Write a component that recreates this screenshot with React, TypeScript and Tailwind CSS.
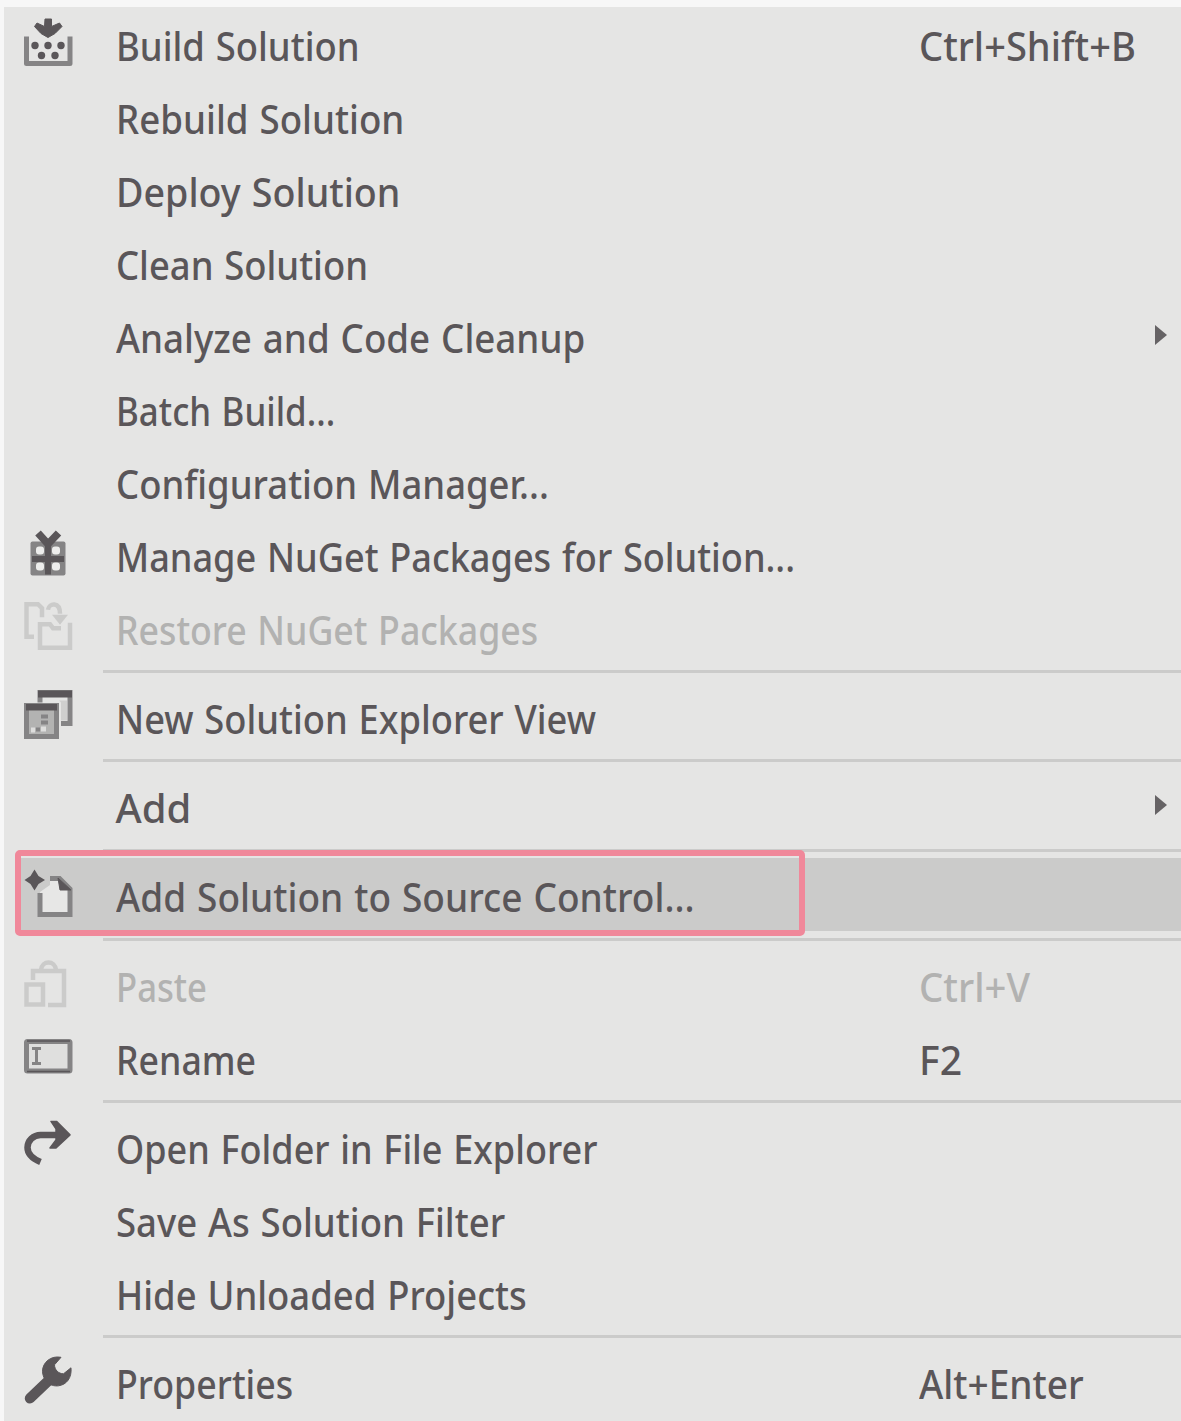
import { Fragment, useLayoutEffect, useRef, useState, type ReactNode } from "react";

const INK = "#5a5659";
const GREY = "#858485";
const FAINT = "#cbcbca";

function Icon({ top, children }: { top: number; children: ReactNode }) {
  return (
    <svg className="block h-14 w-14" viewBox={`20 ${top} 56 56`} fill="none">
      {children}
    </svg>
  );
}

const buildIcon = (
  <Icon top={15.5}>
    <path d="M26.5 37V64H70V37" stroke={GREY} strokeWidth="5" strokeLinejoin="round" />
    <path d="M45 19.500h6.500v7.500l8-3.500 2.500 3.500-7 7-7 4-7-4-6.500-7 2.500-3.500 7.500 3.500z" fill={INK} stroke={INK} strokeLinejoin="round" />
    {[[35, 46], [48, 46], [61, 46], [41.5, 56], [55, 56]].map(([x, y]) => (
      <circle key={`${x}-${y}`} cx={x} cy={y} r="3.700" fill={INK} />
    ))}
  </Icon>
);

const giftIcon = (
  <Icon top={526.5}>
    <rect x="30.500" y="542" width="35" height="34" rx="2" fill={GREY} />
    <path d="M48 543v32M32 559.500h32" stroke={INK} strokeWidth="6" />
    <path d="M38 533.500l10 11 10.500-11" stroke={INK} strokeWidth="7.500" />
    {[[40, 551], [56, 551], [40, 567], [56, 567]].map(([x, y]) => (
      <rect key={`${x}-${y}`} x={x - 4} y={y - 4} width="8" height="8" rx="3" fill="#ededec" />
    ))}
  </Icon>
);

const restoreIcon = (
  <Icon top={599.3}>
    <g stroke={FAINT} strokeWidth="4.500">
      <path d="M34 637h-7.500v-32.500H38l4 4v9" />
      <path d="M48 610c1-7 12-8 12 4" />
      <path d="M70 623v25H40v-23.500h10l3 4h8" />
    </g>
    <path d="M52 615h16l-8 10z" fill={FAINT} />
  </Icon>
);

const windowsIcon = (
  <Icon top={688.5}>
    <path d="M40 703v-10h30v31h-9" stroke={GREY} strokeWidth="5" />
    <path d="M38 691h34v7H38z" fill={INK} />
    <path d="M59 701h8v20h-6v-18z" fill="#cfcfce" />
    <rect x="26.500" y="706" width="30" height="31" fill="#b3b3b2" stroke={GREY} strokeWidth="5" />
    <path d="M26 704.500h31v6.500H26z" fill={INK} />
    <path d="M41 715h7v4h-7zM41 721h7v4h-7zM36 728h4v4h-4z" fill={GREY} />
    <path d="M31 728h4v5h-4zM41 727h5v5h-5z" fill="#dededd" />
  </Icon>
);

const newDocIcon = (
  <Icon top={867}>
    <path d="M50 878.500h10L70 889v25.500H40V892l10-7z" fill="#e7e7e6" />
    <path d="M50 878.500h9.500L70 889v25.500H40V893" stroke={GREY} strokeWidth="5" />
    <path d="M58 878l13 12H60z" fill={INK} stroke={INK} />
    <path d="M34.500 869.500l4 6.500 6.500 4-6.500 4-4 6.500-4-6.500L24.500 880l6-4z" fill={INK} />
  </Icon>
);

const pasteIcon = (
  <Icon top={956}>
    <g stroke={FAINT} strokeWidth="4.500">
      <path d="M33 980v-9h31v34H48" />
      <path d="M41 970c1-10 14-10 15 0" />
      <path d="M26.500 984.500h16.500v20H26.500z" />
    </g>
  </Icon>
);

const renameIcon = (
  <Icon top={1029}>
    <rect x="26.500" y="1041.500" width="43.500" height="29.500" rx="1" fill="#dfdfde" stroke={GREY} strokeWidth="5" />
    <path d="M27 1041h43M27 1071.500h43" stroke={INK} strokeWidth="1.500" />
    <path d="M32 1048.500h9M36.500 1048v15M32 1063.500h9" stroke={GREY} strokeWidth="3" />
  </Icon>
);

const openIcon = (
  <Icon top={1118.6}>
    <path d="M40.500 1162.500C31 1158.500 27.500 1153.500 27.500 1148c0-7 6-12.500 13-12.500H62" stroke={INK} strokeWidth="6.500" />
    <path d="M51 1122h5.500l13.500 13.500-14 13h-6l6-8v-11z" fill={INK} stroke={INK} strokeWidth="1.500" strokeLinejoin="round" />
  </Icon>
);

const wrenchIcon = (
  <Icon top={1353.7}>
    <path d="M30 1399l21-20" stroke={INK} strokeWidth="10.500" strokeLinecap="round" />
    <path
      d="M61 1358c-10-2-18.500 5-18.500 14 0 4 2 8 4 10 3 4 8 5 12 4.500 8-1 13.500-8 12.500-18l-7.500 6c-5 0-9-4-9-9z"
      fill={INK}
      stroke={INK}
      strokeLinejoin="round"
    />
  </Icon>
);

type Item = {
  label: string;
  width: number;
  icon?: ReactNode;
  keys?: string;
  keysWidth?: number;
  arrow?: boolean;
  disabled?: boolean;
  active?: boolean;
};

const groups: Item[][] = [
  [
    { label: "Build Solution", width: 244, icon: buildIcon, keys: "Ctrl+Shift+B", keysWidth: 217 },
    { label: "Rebuild Solution", width: 288 },
    { label: "Deploy Solution", width: 284 },
    { label: "Clean Solution", width: 252 },
    { label: "Analyze and Code Cleanup", width: 469, arrow: true },
    { label: "Batch Build...", width: 219 },
    { label: "Configuration Manager...", width: 433 },
    { label: "Manage NuGet Packages for Solution...", width: 679, icon: giftIcon },
    { label: "Restore NuGet Packages", width: 422, icon: restoreIcon, disabled: true },
  ],
  [{ label: "New Solution Explorer View", width: 480, icon: windowsIcon }],
  [{ label: "Add", width: 76, arrow: true }],
  [{ label: "Add Solution to Source Control...", width: 579, icon: newDocIcon, active: true }],
  [
    { label: "Paste", width: 91, icon: pasteIcon, keys: "Ctrl+V", keysWidth: 111, disabled: true },
    { label: "Rename", width: 140, icon: renameIcon, keys: "F2", keysWidth: 43 },
  ],
  [
    { label: "Open Folder in File Explorer", width: 481, icon: openIcon },
    { label: "Save As Solution Filter", width: 389 },
    { label: "Hide Unloaded Projects", width: 411 },
  ],
  [{ label: "Properties", width: 177, icon: wrenchIcon, keys: "Alt+Enter", keysWidth: 165 }],
];

/* Text condensed or widened to occupy a given width. */
function FitText({ text, width }: { text: string; width: number }) {
  const ref = useRef<HTMLSpanElement>(null);
  const [scale, setScale] = useState(1);
  useLayoutEffect(() => {
    if (ref.current) setScale(width / ref.current.offsetWidth);
  }, [text, width]);
  return (
    <span
      ref={ref}
      className="inline-block origin-left whitespace-nowrap [word-spacing:1.500px]"
      style={{ transform: `scaleX(${scale})` }}
    >
      {text}
    </span>
  );
}

function MenuRow({ item }: { item: Item }) {
  return (
    <div
      className={`relative flex h-[72.95px] shrink-0 items-center pl-4 ${
        item.active ? "bg-[linear-gradient(90deg,transparent_14px,#cbcbca_14px)]" : ""
      } ${item.disabled ? "text-[#b2b2b1]" : "text-[#5a5659]"}`}
    >
      <div className="w-[95.500px] shrink-0">{item.icon}</div>
      <div className="w-[803.500px] shrink-0 pt-[5.500px]">
        <FitText text={item.label} width={item.width} />
      </div>
      {item.keys && (
        <div className="pt-[5.500px]">
          <FitText text={item.keys} width={item.keysWidth ?? 0} />
        </div>
      )}
      {item.arrow && (
        <svg className="mr-[13px] ml-auto h-[22px] w-[14px]" viewBox="0 0 14 22">
          <path d="M1 1l12 10L1 21z" fill="#666365" />
        </svg>
      )}
      {item.active && (
        <div className="absolute top-[-8px] left-[11px] h-[86px] w-[790px] rounded-[5px] border-[6px] border-[#f0889a]" />
      )}
    </div>
  );
}

export default function App() {
  return (
    <div className="h-[1421px] w-[1181px] overflow-hidden bg-[#f7f7f7] pt-[7px] pl-1">
      <div className="flex h-full flex-col bg-[#e5e5e4] font-['Noto_Sans',sans-serif] text-[40px] leading-none font-medium">
        {groups.map((group, index) => (
          <Fragment key={group[0].label}>
            {index > 0 && (
              <div className="flex h-[16.300px] shrink-0 items-center pl-[99px]">
                <div className="h-[3px] w-full bg-[#cbcbca]" />
              </div>
            )}
            {group.map((item) => (
              <MenuRow key={item.label} item={item} />
            ))}
          </Fragment>
        ))}
      </div>
    </div>
  );
}
